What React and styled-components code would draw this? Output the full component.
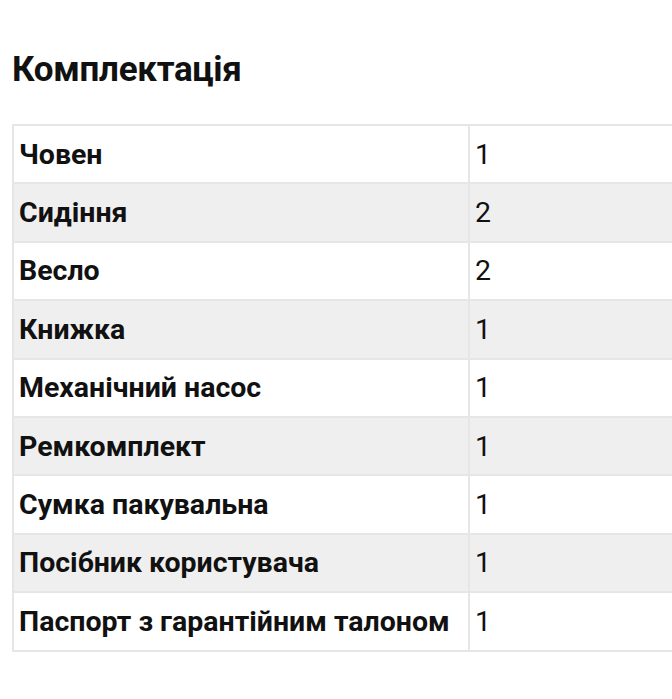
import React from "react";
import styled, { createGlobalStyle } from "styled-components";

const GlobalStyle = createGlobalStyle`
  html, body {
    margin: 0;
    padding: 0;
    background: #fff;
  }
  body {
    font-family: Roboto, "Liberation Sans", sans-serif;
    color: #111;
  }
`;

const Page = styled.div`
  width: 672px;
  padding: 50px 0 0 12px;
  box-sizing: border-box;
  overflow: hidden;
`;

const Title = styled.h2`
  margin: 0 0 34px;
  font-size: 35px;
  font-weight: 700;
  line-height: 40px;
  letter-spacing: -0.3px;
`;

const Table = styled.table`
  border-collapse: collapse;
  width: 720px;
  border: 2px solid #e6e6e6;
`;

const Row = styled.tr`
  background: ${p => (p.$odd ? "#efefef" : "#fff")};
`;

const Cell = styled.td`
  border: 2px solid #e6e6e6;
  height: 58.4px;
  padding: 0 0 0 5px;
  font-size: 28.5px;
  font-weight: ${p => (p.$bold ? 700 : 400)};
  width: ${p => p.$w || "auto"};
  vertical-align: middle;
  white-space: nowrap;
  box-sizing: border-box;
`;

const items = [
  ["Човен", 1],
  ["Сидіння", 2],
  ["Весло", 2],
  ["Книжка", 1],
  ["Механічний насос", 1],
  ["Ремкомплект", 1],
  ["Сумка пакувальна", 1],
  ["Посібник користувача", 1],
  ["Паспорт з гарантійним талоном", 1]
];

export default function App() {
  return (
    <Page>
      <GlobalStyle />
      <Title>Комплектація</Title>
      <Table>
        <tbody>
          {items.map(([name, qty], i) => (
            <Row key={name} $odd={i % 2 === 1}>
              <Cell $bold $w="456px">{name}</Cell>
              <Cell>{qty}</Cell>
            </Row>
          ))}
        </tbody>
      </Table>
    </Page>
  );
}
